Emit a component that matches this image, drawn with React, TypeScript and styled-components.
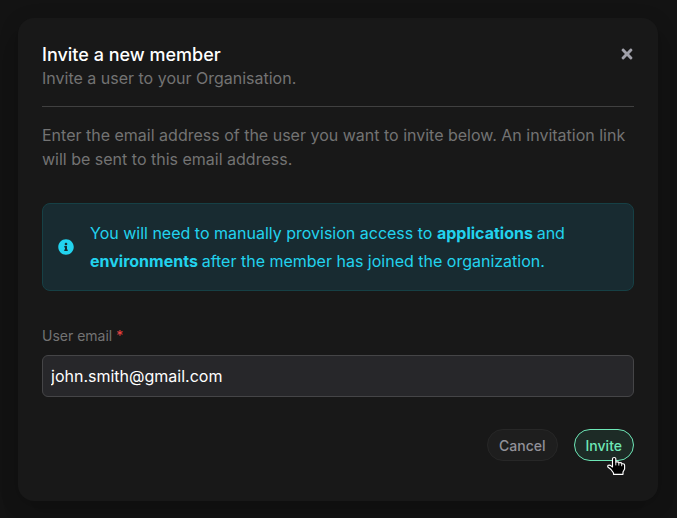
import React, { useState } from "react";
import styled, { createGlobalStyle, css } from "styled-components";
import { FaInfoCircle, FaTimes } from "react-icons/fa";

const GlobalStyle = createGlobalStyle`
  *, *::before, *::after { box-sizing: border-box; }
  body {
    margin: 0;
    background: #131313;
    color: #fff;
    font-family: Inter, "Liberation Sans", sans-serif;
    font-size: 16px;
    line-height: 24px;
    overflow: hidden;
  }
  p, h3 { margin: 0; font-weight: 400; }
`;

const Backdrop = styled.div`
  height: 518px;
  padding: 18px 19px 17px 18px;
`;

const Panel = styled.section`
  height: 483px;
  padding: 24px;
  border-radius: 16px;
  background: #181818;
  box-shadow: 0 20px 25px -5px rgba(0, 0, 0, 0.1), 0 4px 20px rgba(0, 0, 0, 0.16);
`;

const Header = styled.header`
  display: flex;
  justify-content: space-between;
  align-items: flex-start;
  height: 65px;
  border-bottom: 1px solid #404040;
`;

const Title = styled.h3`
  height: 24px;
  font-size: 18px;
  font-weight: 500;
  line-height: 26px;
`;

const Muted = styled.p`
  color: #737373;
`;

const CloseButton = styled.button`
  display: flex;
  margin-top: 4px;
  padding: 0;
  border: 0;
  background: none;
  color: #a1a1aa;
  font-size: 16px;
  width: 14px;
  justify-content: center;
`;

const Intro = styled(Muted)`
  margin-top: 16px;
`;

const Alert = styled.div`
  display: flex;
  align-items: center;
  gap: 16px;
  height: 88px;
  margin-top: 32px;
  padding: 0 15px;
  border: 1px solid #164045;
  border-radius: 8px;
  background: #182b31;
  color: #22d3ee;
  line-height: 28px;

  svg { flex: none; }
  b { font-weight: 700; }
`;

const Label = styled.label`
  display: block;
  margin: 35px 0 9px;
  color: #737373;
  font-size: 14px;
  line-height: 20px;

  span { color: #ef4444; }
`;

const Input = styled.input`
  display: block;
  width: 100%;
  height: 42px;
  padding: 8px;
  border: 1px solid #454547;
  border-radius: 6px;
  outline: none;
  background: #27272a;
  color: #fff;
  font: inherit;
`;

const Actions = styled.footer`
  display: flex;
  justify-content: flex-end;
  gap: 16px;
  margin-top: 32px;
`;

const Button = styled.button<{ $primary?: boolean }>`
  position: relative;
  height: 32px;
  padding: 2px 11px 0;
  border: 1px solid #272727;
  border-radius: 16px;
  background: #1e1e1e;
  color: #919199;
  font: 500 14px/20px Inter, "Liberation Sans", sans-serif;
  white-space: nowrap;

  ${({ $primary }) =>
    $primary &&
    css`
      border-color: #6ee7b7;
      background: #1d2b26;
      color: #6ee7b7;
    `}
`;

const Pointer = styled.svg`
  position: absolute;
  left: 32px;
  top: 26px;
  pointer-events: none;
`;

export default function App() {
  const [email, setEmail] = useState("john.smith@gmail.com");
  return (
    <>
      <GlobalStyle />
      <Backdrop>
        <Panel role="dialog" aria-label="Invite a new member">
          <Header>
            <div>
              <Title>Invite a new member</Title>
              <Muted>Invite a user to your Organisation.</Muted>
            </div>
            <CloseButton aria-label="Close">
              <FaTimes />
            </CloseButton>
          </Header>
          <Intro>
            Enter the email address of the user you want to invite below. An invitation link will be
            sent to this email address.
          </Intro>
          <Alert>
            <FaInfoCircle />
            <p>
              You will need to manually provision access to <b>applications </b>and{" "}
              <b>environments </b>after the member has joined the organization.
            </p>
          </Alert>
          <Label htmlFor="email">
            User email <span>*</span>
          </Label>
          <Input id="email" value={email} onChange={(e) => setEmail(e.target.value)} />
          <Actions>
            <Button>Cancel</Button>
            <Button $primary>
              Invite
              <Pointer width="20" height="20" viewBox="0 0 20 20" aria-hidden="true">
                <path
                  d="M5.5 11V2.7Q5.5 1.5 7.2 1.5Q8.8 1.5 8.8 2.7V6Q11.6 5.5 12 6.8Q14.4 6.3 15 7.8Q17.6 7.3 17.6 9.5V13L16 16V18.3H6.5V17L4 13.5L0.9 11Q0.3 9.3 1.8 9.1Q3 8.9 4.1 9.9Z"
                  fill="#000"
                  stroke="#fff"
                  strokeWidth="1.15"
                  strokeLinejoin="round"
                />
                <path d="M8.8 6V9.4M11.8 7V9.6M14.7 8V10.2" stroke="#fff" strokeWidth="0.9" />
              </Pointer>
            </Button>
          </Actions>
        </Panel>
      </Backdrop>
    </>
  );
}
